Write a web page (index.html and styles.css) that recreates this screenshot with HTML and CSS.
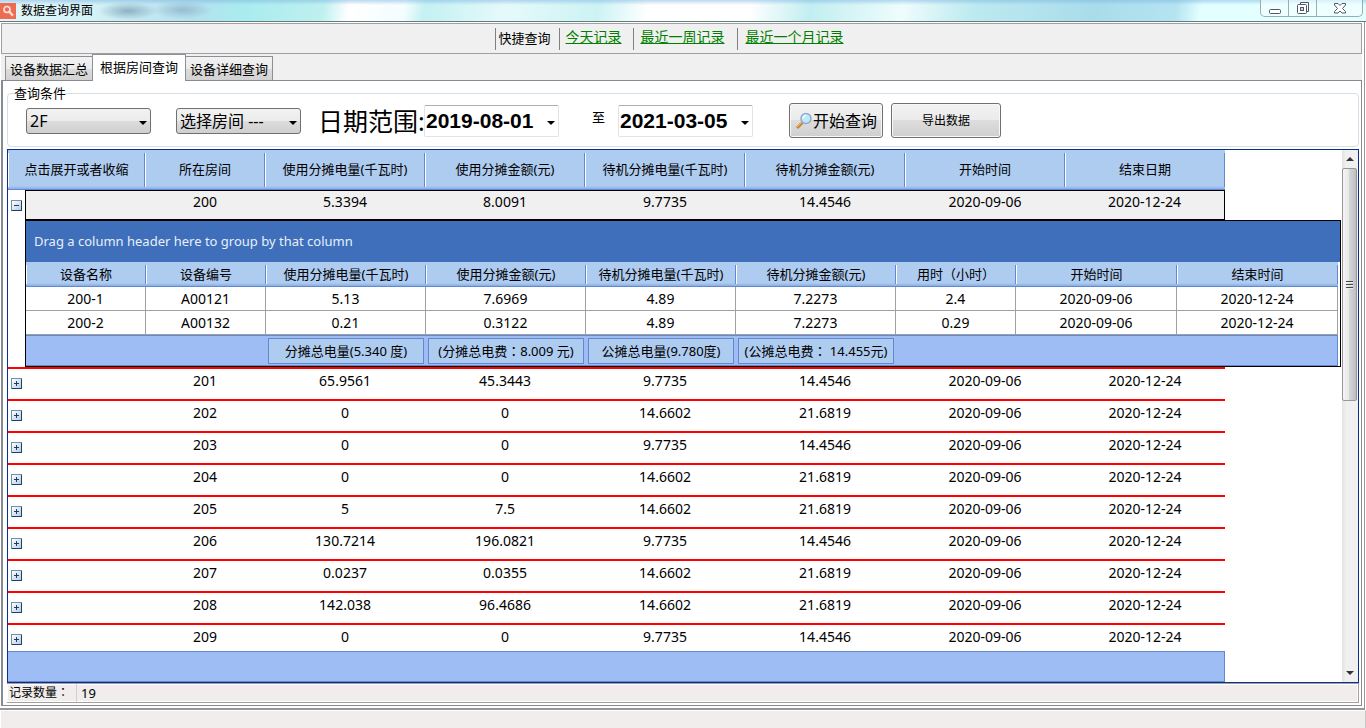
FILE: index.html
```html
<!DOCTYPE html>
<html lang="zh-CN">
<head>
<meta charset="utf-8">
<title>数据查询界面</title>
<link rel="stylesheet" href="styles.css">
</head>
<body>
<header class="titlebar">
  <svg class="app-icon" width="16" height="16" viewBox="0 0 16 16" aria-hidden="true"><rect width="16" height="16" fill="#ed6c52"/><circle cx="7" cy="6.500" r="3" fill="none" stroke="#fbe3dc" stroke-width="1.700"/><path d="M9.200 8.800L13 12.600" stroke="#fbe3dc" stroke-width="2.200"/></svg>
  <h1 class="title">数据查询界面</h1>
  <div class="caption">
    <button class="cap" aria-label="最小化"><svg width="14" height="14" viewBox="0 0 14 14"><rect x="1.500" y="8.500" width="11" height="4" rx="1" fill="#fff" stroke="#535666"/></svg></button>
    <button class="cap" aria-label="还原"><svg width="14" height="14" viewBox="0 0 14 14"><path d="M4.500 3.500v-2h8v9h-2" fill="#fff" stroke="#535666"/><rect x="1.500" y="3.500" width="9" height="9" rx="1" fill="#fff" stroke="#535666"/><rect x="4.500" y="6.500" width="3" height="3" fill="#b6e6ef" stroke="#535666"/></svg></button>
    <button class="cap close" aria-label="关闭"><svg width="14" height="14" viewBox="0 0 14 14"><path d="M1.500 2.500h3.500l2 2 2-2h3.500v1.500L9.500 7.500l3 3v1.500H9l-2-2-2 2H1.500v-1.500l3-3-3-3.500z" fill="#fff" stroke="#535666"/></svg></button>
  </div>
</header>
<main class="frame">
  <nav class="toolbar">
    <span class="quick">快捷查询</span>
    <a href="#" class="quick-link">今天记录</a>
    <a href="#" class="quick-link">最近一周记录</a>
    <a href="#" class="quick-link">最近一个月记录</a>
  </nav>
  <div class="tabs" role="tablist">
    <button class="tab" role="tab">设备数据汇总</button>
    <button class="tab active" role="tab" aria-selected="true">根据房间查询</button>
    <button class="tab" role="tab">设备详细查询</button>
  </div>
  <section class="pane">
    <fieldset class="filters">
      <legend>查询条件</legend>
      <div class="controls">
        <span class="select"><select aria-label="楼层"><option>2F</option></select></span>
        <span class="select"><select aria-label="房间"><option>选择房间 ---</option></select></span>
        <div class="range">
          <label class="range-label" for="from">日期范围:</label>
          <span class="date"><input id="from" type="text" value="2019-08-01"></span>
        </div>
        <label class="to" for="until">至</label>
        <span class="date"><input id="until" type="text" value="2021-03-05"></span>
        <button class="btn search"><svg width="18" height="18" viewBox="0 0 18 18" aria-hidden="true"><path d="M2 16L7.500 10.500" stroke="#c98232" stroke-width="3"/><path d="M2 15L7 10" stroke="#f2bd70" stroke-width="1"/><circle cx="11" cy="6.500" r="5" fill="#bdeafa" stroke="#8fa9cc" stroke-width="1.500"/><path d="M8 6.500a3 3 0 0 1 3-3" stroke="#fff" stroke-width="1.500" fill="none"/></svg>开始查询</button>
        <button class="btn export">导出数据</button>
      </div>
    </fieldset>
    <div class="grid">
      <div class="view">
        <table class="rooms">
          <colgroup><col class="w17"><col class="w120"><col class="w120"><col class="w160"><col class="w160"><col class="w160"><col class="w160"><col class="w160"><col class="w160"><col></colgroup>
          <thead>
            <tr><th colspan="2">点击展开或者收缩</th><th>所在房间</th><th>使用分摊电量(千瓦时)</th><th>使用分摊金额(元)</th><th>待机分摊电量(千瓦时)</th><th>待机分摊金额(元)</th><th>开始时间</th><th>结束日期</th><td></td></tr>
          </thead>
          <tbody>
            <tr class="open"><td><button class="toggle minus" aria-label="收缩"></button></td><td></td><td>200</td><td>5.3394</td><td>8.0091</td><td>9.7735</td><td>14.4546</td><td>2020-09-06</td><td>2020-12-24</td><td></td></tr>
            <tr class="detail-row"><td></td><td colspan="9">
              <div class="detail">
                <div class="group-hint">Drag a column header here to group by that column</div>
                <div class="devices-wrap">
                <table class="devices">
                  <colgroup><col class="w120"><col class="w120"><col class="w160"><col class="w160"><col class="w150"><col class="w160"><col class="w120"><col><col></colgroup>
                  <thead><tr><th>设备名称</th><th>设备编号</th><th>使用分摊电量(千瓦时)</th><th>使用分摊金额(元)</th><th>待机分摊电量(千瓦时)</th><th>待机分摊金额(元)</th><th>用时<span class="punct">（</span>小时<span class="punct">）</span></th><th>开始时间</th><th>结束时间</th></tr></thead>
                  <tbody>
                    <tr><td>200-1</td><td>A00121</td><td>5.13</td><td>7.6969</td><td>4.89</td><td>7.2273</td><td>2.4</td><td>2020-09-06</td><td>2020-12-24</td></tr>
                    <tr><td>200-2</td><td>A00132</td><td>0.21</td><td>0.3122</td><td>4.89</td><td>7.2273</td><td>0.29</td><td>2020-09-06</td><td>2020-12-24</td></tr>
                  </tbody>
                  <tfoot><tr><td></td><td></td><td><span class="sum">分摊总电量(5.340 度)</span></td><td><span class="sum">(分摊总电费<span class="punct" lang="zh-TW">：</span>8.009 元)</span></td><td><span class="sum">公摊总电量(9.780度)</span></td><td><span class="sum">(公摊总电费<span class="punct" lang="zh-TW">：</span> 14.455元)</span></td><td></td><td></td><td></td></tr></tfoot>
                </table>
                </div>
              </div>
            </td></tr>
            <tr class="room"><td><button class="toggle" aria-label="展开"></button></td><td></td><td>201</td><td>65.9561</td><td>45.3443</td><td>9.7735</td><td>14.4546</td><td>2020-09-06</td><td>2020-12-24</td><td></td></tr>
            <tr class="room"><td><button class="toggle" aria-label="展开"></button></td><td></td><td>202</td><td>0</td><td>0</td><td>14.6602</td><td>21.6819</td><td>2020-09-06</td><td>2020-12-24</td><td></td></tr>
            <tr class="room"><td><button class="toggle" aria-label="展开"></button></td><td></td><td>203</td><td>0</td><td>0</td><td>9.7735</td><td>14.4546</td><td>2020-09-06</td><td>2020-12-24</td><td></td></tr>
            <tr class="room"><td><button class="toggle" aria-label="展开"></button></td><td></td><td>204</td><td>0</td><td>0</td><td>14.6602</td><td>21.6819</td><td>2020-09-06</td><td>2020-12-24</td><td></td></tr>
            <tr class="room"><td><button class="toggle" aria-label="展开"></button></td><td></td><td>205</td><td>5</td><td>7.5</td><td>14.6602</td><td>21.6819</td><td>2020-09-06</td><td>2020-12-24</td><td></td></tr>
            <tr class="room"><td><button class="toggle" aria-label="展开"></button></td><td></td><td>206</td><td>130.7214</td><td>196.0821</td><td>9.7735</td><td>14.4546</td><td>2020-09-06</td><td>2020-12-24</td><td></td></tr>
            <tr class="room"><td><button class="toggle" aria-label="展开"></button></td><td></td><td>207</td><td>0.0237</td><td>0.0355</td><td>14.6602</td><td>21.6819</td><td>2020-09-06</td><td>2020-12-24</td><td></td></tr>
            <tr class="room"><td><button class="toggle" aria-label="展开"></button></td><td></td><td>208</td><td>142.038</td><td>96.4686</td><td>14.6602</td><td>21.6819</td><td>2020-09-06</td><td>2020-12-24</td><td></td></tr>
            <tr class="room last"><td><button class="toggle" aria-label="展开"></button></td><td></td><td>209</td><td>0</td><td>0</td><td>9.7735</td><td>14.4546</td><td>2020-09-06</td><td>2020-12-24</td><td></td></tr>
          </tbody>
          <tfoot><tr><td colspan="9" class="totals"></td><td></td></tr></tfoot>
        </table>
      </div>
      <div class="scrollbar">
        <span class="arrow up"></span>
        <div class="track"><div class="thumb"><i></i><i></i><i></i></div></div>
        <span class="arrow down"></span>
      </div>
    </div>
    <div class="status"><span class="status-label">记录数量<span class="punct" lang="zh-TW">：</span></span><span class="status-value">19</span></div>
  </section>
</main>
<footer class="bottom"></footer>
</body>
</html>
```
FILE: styles.css
```css
* { box-sizing: border-box; }
body {
  margin: 0;
  min-height: 100vh;
  display: flex;
  flex-direction: column;
  background: #fff;
  color: #000;
  font: 13px/18px "Noto Sans", "Noto Sans CJK SC", sans-serif;
}
button, input, select { font: inherit; color: inherit; margin: 0; }
.punct { font-family: "Noto Sans CJK TC", sans-serif; line-height: 1; }

.titlebar {
  display: flex;
  align-items: flex-start;
  height: 22px;
  border-bottom: 1px solid #657c7c;
  background:
    radial-gradient(ellipse 30px 9px at 128px 11px, rgba(100, 140, 165, .6), transparent),
    radial-gradient(ellipse 30px 9px at 182px 10px, rgba(110, 155, 180, .5), transparent),
    linear-gradient(180deg, rgba(120, 180, 225, .5), transparent 5px),
    linear-gradient(100deg, #e4f6fa 0, #d5f2f7 90px, #b7e0ee 190px, #a8ecee 240px, #bff0f0 320px, #fff 345px, #f4fdfe 400px, #c4f1f2 420px, #e6f9fa 500px, #ccf3f4 590px, #fff 640px, #fff 740px, #c2eef1 800px, #effcfc 890px, #bdeaf0 960px, #a9dcea 1080px, #b5e4f1 1160px, #e4ffff 1185px, #e4ffff 1366px);
}
.app-icon { margin-top: 3px; }
.title { margin: 2px 0 0 5px; font-size: 12px; line-height: 18px; font-weight: 400; }
.caption {
  display: flex;
  height: 17px;
  margin-left: auto;
  margin-right: 3px;
  border: 1px solid #9aaeb2;
  border-top: 0;
  border-radius: 0 0 5px 5px;
  background: rgba(245, 255, 255, .6);
}
.cap {
  display: flex;
  align-items: center;
  justify-content: center;
  width: 28px;
  padding: 0;
  border: 0;
  border-right: 1px solid #9aaeb2;
  background: none;
}
.close { width: 45px; border-right: 0; }

.frame {
  flex: 1;
  display: flex;
  flex-direction: column;
  margin-right: 1px;
  padding: 1px 2px 2px 1px;
  border-right: 1px solid #979797;
  border-bottom: 2px solid #979797;
}
.toolbar {
  display: flex;
  align-items: center;
  justify-content: center;
  height: 31px;
  padding-right: 24px;
  border: 1px solid #a0a0a0;
  background: #f0f0f0;
}
.quick, .quick-link { height: 22px; line-height: 20px; border-left: 1px solid #808080; }
.quick { padding: 0 8px 0 2px; }
.quick-link { padding: 0 11px 0 6px; font-size: 14px; line-height: 18px; color: #008000; }
.quick-link:last-child { padding: 0 0 0 8px; }
.quick-link:nth-child(3) { padding-left: 7px; padding-right: 12px; }

.tabs { display: flex; align-items: flex-end; height: 26px; padding-left: 4px; background: #f0f0f0; }
.tab {
  height: 24px;
  padding: 0 4px;
  border: 1px solid #8c8f98;
  border-bottom-width: 0;
  background: linear-gradient(#f2f2f2, #ebebeb 50%, #dcdcdc 50%, #d2d2d2);
  white-space: nowrap;
}
.tab.active { height: 27px; margin: 0 -1px -1px; padding: 0 7px 2px; background: #fff; position: relative; }

.pane {
  flex: 1;
  display: flex;
  flex-direction: column;
  padding: 3px 2px 2px 4px;
  border: 1px solid #868a93;
  border-left-width: 2px;
  background: #fff;
}
.filters { min-width: 0; margin: 0; padding: 0 18px 7px; border: 1px solid #d5dfe5; border-radius: 4px; }
.filters legend { margin-left: -12px; padding: 0; line-height: 18px; }
.controls { display: flex; align-items: center; height: 37px; }
.select, .date { position: relative; display: block; }
.select { width: 125px; margin-right: 25px; }
.select + .select { margin-right: 17px; }
.select select {
  appearance: none;
  display: block;
  width: 100%;
  height: 26px;
  padding: 0 18px 0 3px;
  border: 1px solid #707070;
  border-radius: 3px;
  background: linear-gradient(#f2f2f2, #ebebeb 50%, #dddddd 50%, #cfcfcf);
  font-size: 16px;
}
.select::after, .date::after {
  content: "";
  position: absolute;
  right: 4px;
  top: 50%;
  border: 4px solid transparent;
  border-top-color: #000;
  border-bottom: 0;
}
.range { display: flex; align-items: center; }
.range-label { width: 106px; font-size: 25px; line-height: 32px; white-space: nowrap; }
.date { width: 135px; }
.date input {
  display: block;
  width: 100%;
  height: 32px;
  padding: 0 18px 0 1px;
  border: 1px solid #e2e3ea;
  border-top-color: #abadb3;
  border-radius: 2px;
  background: #fff;
  font: bold 21px "Liberation Sans", sans-serif;
}
.to { width: 59px; padding: 0 0 8px 33px; }
.btn {
  display: flex;
  align-items: center;
  justify-content: center;
  height: 35px;
  padding: 0;
  border: 1px solid #707070;
  border-radius: 3px;
  background: linear-gradient(#f2f2f2, #ebebeb 50%, #dddddd 50%, #cfcfcf);
  box-shadow: inset 0 0 0 1px #f8f8f8;
}
.search { width: 94px; margin: 0 8px 0 36px; font-size: 16px; }
.export { width: 110px; font-size: 12px; }

.grid { flex: 1; display: flex; margin-top: 2px; border: 1px solid #0b2e8a; }
.view { flex: 1; min-width: 0; }
table { width: 100%; table-layout: fixed; border-collapse: separate; border-spacing: 0; }
th, td { padding: 0; font-weight: 400; text-align: center; white-space: nowrap; }
.w17 { width: 17px; }
.w120 { width: 120px; }
.w150 { width: 150px; }
.w160 { width: 160px; }
.rooms th, .devices th {
  border-bottom: 1px solid #6488d0;
  background:
    linear-gradient(#6488d0, #6488d0) right 0 top 3px / 1px calc(100% - 5px) no-repeat,
    linear-gradient(#fff, #fff) left 0 top 3px / 1px calc(100% - 5px) no-repeat,
    linear-gradient(#aecbf0 calc(100% - 3px), #86aee8);
}
.rooms > thead th { height: 40px; padding-bottom: 1px; }
.open td { height: 30px; padding-bottom: 6px; font-size: 14px; }
.open td:nth-child(n+2):nth-child(-n+9) { border: solid #000; border-width: 1px 0; background: #f0f0f0; }
.open td:nth-child(2) { border-left-width: 1px !important; }
.open td:nth-child(9) { border-right-width: 1px !important; }
.open td:first-child { padding: 0; }
.room td:first-child { padding: 0 0 2px; }
.detail { margin-right: 1px; border: 1px solid #000; }
.group-hint { padding: 0 8px; line-height: 41px; font-size: 13px; text-align: left; color: #e6f0fb; background: #3f6eba; }
.devices-wrap { padding-right: 2px; }
.devices thead th { height: 25px; }
.devices tbody td { height: 24px; border: solid #a0a0a0; border-width: 0 1px 1px 0; font-size: 14px; }
.devices tfoot td { height: 31px; border: solid #6488d0; border-width: 1px 0; background: #9fbdf5; }
.devices tfoot td:last-child { border-right-width: 1px; }
.sum { display: block; height: 26px; margin: 0 2px; line-height: 24px; border: 1px solid #6488d0; background: #aecbf0; }
.room td { height: 32px; padding-bottom: 6px; font-size: 14px; border-top: 2px solid #f00; }
.room td:last-child { border-top: 0; }
.room.last td { height: 28px; padding-bottom: 2px; }
.room.last td:first-child { padding: 2px 0 0; }
.totals { height: 31px; border: 1px solid #6488d0; border-left: 0; background: #9fbdf5; }
.toggle {
  display: block;
  width: 11px;
  height: 11px;
  margin: 0 auto;
  padding: 0;
  border: 1px solid #7390a8;
  border-right-color: #1d3f60;
  border-bottom-color: #1d3f60;
  border-radius: 1px;
  background:
    linear-gradient(#1d3f60, #1d3f60) center / 5px 1px no-repeat,
    linear-gradient(#1d3f60, #1d3f60) center / 1px 5px no-repeat,
    linear-gradient(135deg, #fff, #b9cbe8);
}
.minus {
  background:
    linear-gradient(#1d3f60, #1d3f60) center / 5px 1px no-repeat,
    linear-gradient(135deg, #fff, #b9cbe8);
}

.scrollbar { display: flex; flex-direction: column; width: 16px; background: linear-gradient(90deg, #e3e3e3, #f0f0f0 4px, #f0f0f0); }
.arrow { display: flex; align-items: center; justify-content: center; height: 18px; }
.arrow::after { content: ""; border: 4px solid transparent; }
.up::after { border-top: 0; border-bottom-color: #333; }
.down::after { border-bottom: 0; border-top-color: #333; }
.track { flex: 1; }
.thumb {
  display: flex;
  flex-direction: column;
  align-items: center;
  justify-content: center;
  gap: 1px;
  height: 47%;
  margin-right: 1px;
  border: 1px solid #979797;
  border-radius: 2px;
  background: linear-gradient(90deg, #f5f5f5, #e9e9eb 45%, #d4d5d8 50%, #bdbec2);
}
.thumb i { width: 7px; height: 2px; border-top: 1px solid #444; background: #eee; }

.status {
  display: flex;
  height: 20px;
  border: solid #a0a0a0;
  border-width: 1px 1px 1px 0;
  background: #f0edec;
  box-shadow: inset 0 0 0 1px #fff;
}
.status-label { width: 70px; padding-left: 2px; border-right: 1px solid #d0d0d0; font-size: 12px; white-space: nowrap; }
.status-value { padding-left: 4px; }
.bottom { height: 18px; border: 1px solid #fff; border-right-color: #c8c8c8; border-bottom: 0; background: #f0edec; }
```
